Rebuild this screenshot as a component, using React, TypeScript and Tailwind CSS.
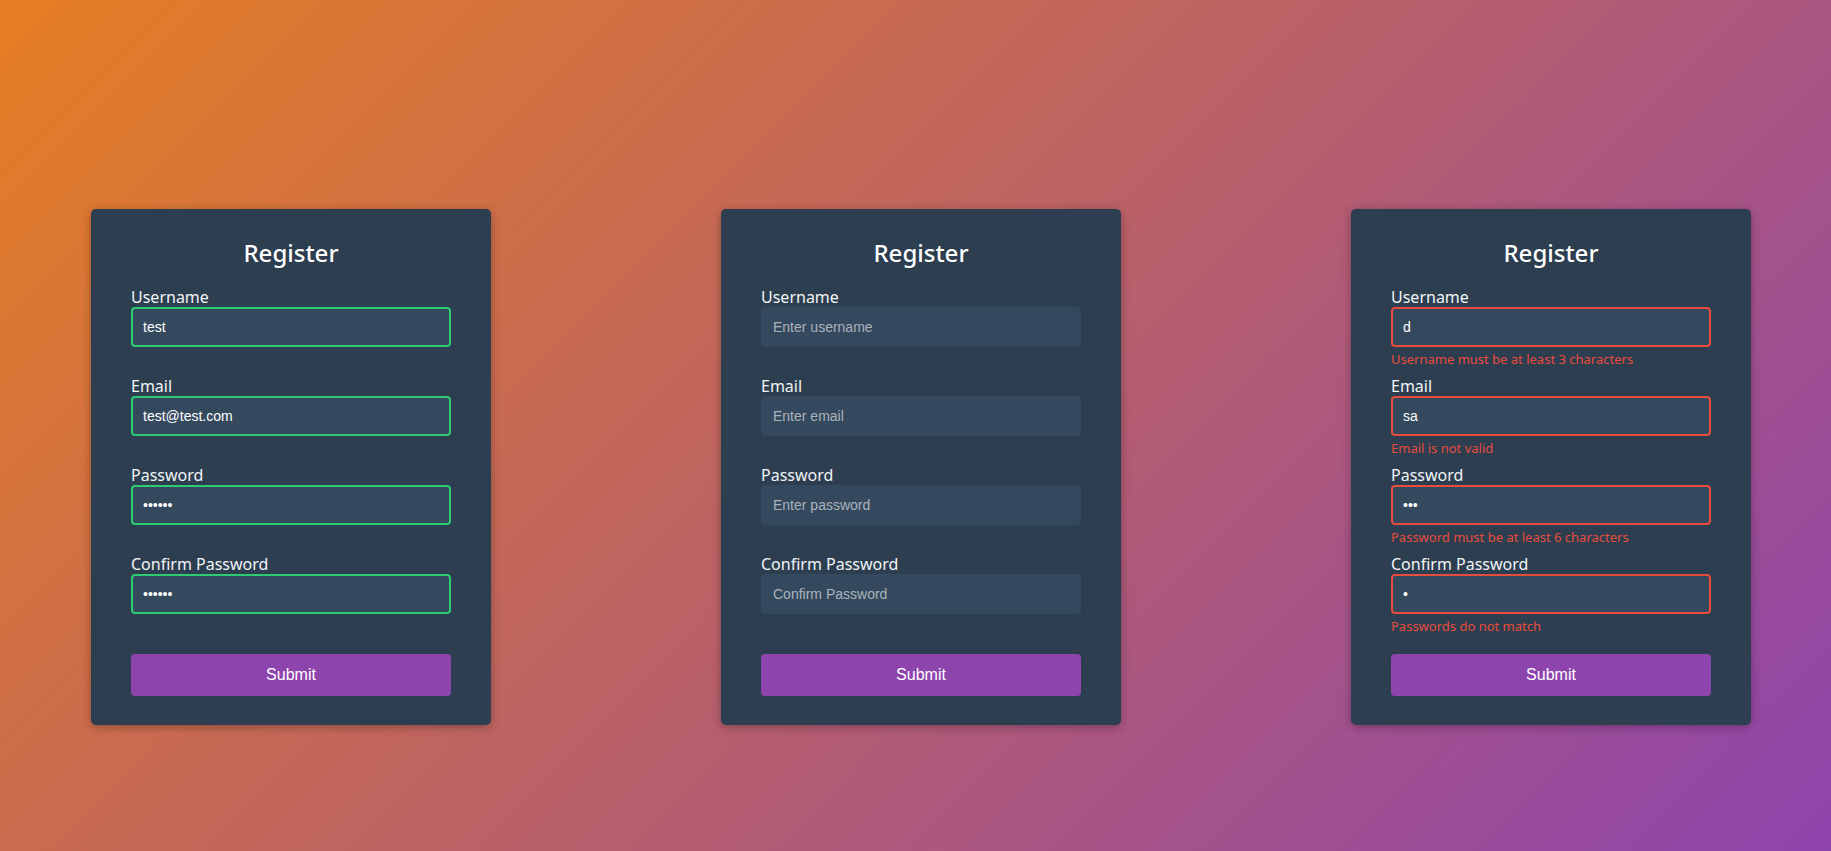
import React from "react";

type Status = "ok" | "idle" | "error";

interface Field {
  label: string;
  type: string;
  placeholder: string;
  value?: string;
  error?: string;
}

interface FormProps {
  status: Status;
  fields: Field[];
}

const borderByStatus: Record<Status, string> = {
  ok: "border-[#2ecc71]",
  idle: "border-[#34495e]",
  error: "border-[#e74c3c]",
};

const RegisterCard: React.FC<FormProps> = ({ status, fields }) => {
  return (
    <form
      onSubmit={(e) => e.preventDefault()}
      className="w-[400px] shrink-0 bg-[#2c3e50] rounded-[5px] shadow-[0_2px_10px_rgba(0,0,0,0.3)] px-[40px] pt-[30px] pb-[29px]"
    >
      {/* Title */}
      <h2 className="text-center text-[24px] leading-[28px] font-medium text-white mb-[21px] font-['Noto_Sans',sans-serif]">
        Register
      </h2>

      {fields.map((f) => (
        <div key={f.label} className="mb-[10px]">
          <label className="block text-[16px] leading-[19px] text-[#f2f4f5] font-['Noto_Sans',sans-serif]">
            {f.label}
          </label>
          <input
            type={f.type}
            placeholder={f.placeholder}
            defaultValue={f.value}
            className={`block w-full h-[40px] px-[10px] rounded-[4px] border-2 ${borderByStatus[status]} bg-[#34495e] text-white text-[14px] font-['Liberation_Sans',Arial,sans-serif] placeholder:text-[#aab2bb] outline-none`}
          />
          <div className="h-[20px] flex items-end">
            {f.error ? (
              <small className="text-[13px] leading-[16px] text-[#e74c3c] font-['Noto_Sans',sans-serif]">
                {f.error}
              </small>
            ) : null}
          </div>
        </div>
      ))}

      <button
        type="submit"
        className="mt-[20px] block w-full h-[42px] rounded-[4px] bg-[#8e44ad] text-white text-[16px] font-['Liberation_Sans',Arial,sans-serif]"
      >
        Submit
      </button>
    </form>
  );
};

const validFields: Field[] = [
  { label: "Username", type: "text", placeholder: "Enter username", value: "test" },
  { label: "Email", type: "text", placeholder: "Enter email", value: "test@test.com" },
  { label: "Password", type: "password", placeholder: "Enter password", value: "123456" },
  { label: "Confirm Password", type: "password", placeholder: "Confirm Password", value: "123456" },
];

const emptyFields: Field[] = [
  { label: "Username", type: "text", placeholder: "Enter username" },
  { label: "Email", type: "text", placeholder: "Enter email" },
  { label: "Password", type: "password", placeholder: "Enter password" },
  { label: "Confirm Password", type: "password", placeholder: "Confirm Password" },
];

const errorFields: Field[] = [
  {
    label: "Username",
    type: "text",
    placeholder: "Enter username",
    value: "d",
    error: "Username must be at least 3 characters",
  },
  { label: "Email", type: "text", placeholder: "Enter email", value: "sa", error: "Email is not valid" },
  {
    label: "Password",
    type: "password",
    placeholder: "Enter password",
    value: "abc",
    error: "Password must be at least 6 characters",
  },
  {
    label: "Confirm Password",
    type: "password",
    placeholder: "Confirm Password",
    value: "a",
    error: "Passwords do not match",
  },
];

export default function App() {
  return (
    <div className="min-h-screen w-full bg-[linear-gradient(135deg,#e67e22,#8e44ad)] pt-[209px] pb-[40px]">
      <div className="flex gap-[230px] pl-[91px]">
        <RegisterCard status="ok" fields={validFields} />
        <RegisterCard status="idle" fields={emptyFields} />
        <RegisterCard status="error" fields={errorFields} />
      </div>
    </div>
  );
}
